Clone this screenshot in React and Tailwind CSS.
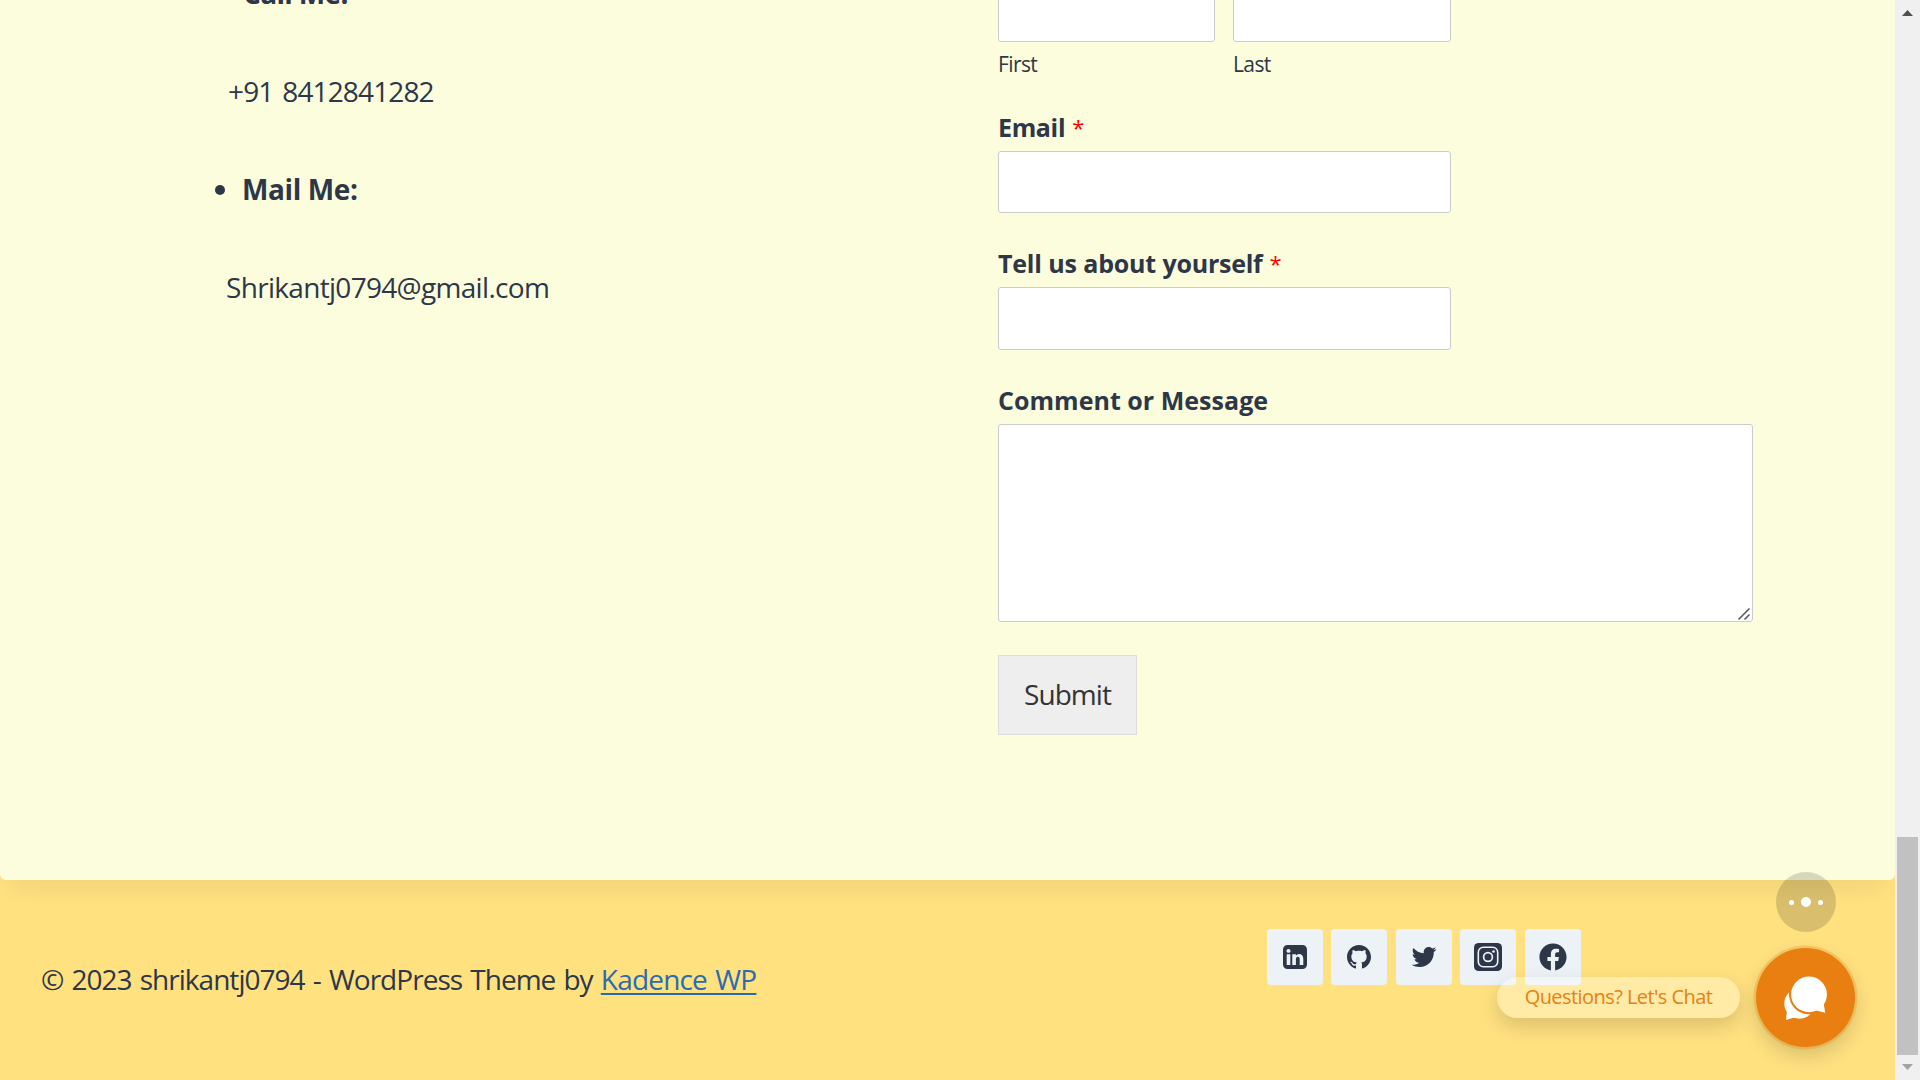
import { FaFacebook } from "react-icons/fa";

const LINKEDIN =
  "M3.703 22.094h3.609v-10.844h-3.609v10.844zM7.547 7.906c-0.016-1.062-0.781-1.875-2.016-1.875s-2.047 0.812-2.047 1.875c0 1.031 0.781 1.875 2 1.875h0.016c1.266 0 2.047-0.844 2.047-1.875zM16.688 22.094h3.609v-6.219c0-3.328-1.781-4.875-4.156-4.875-1.937 0-2.797 1.078-3.266 1.828h0.031v-1.578h-3.609s0.047 1.016 0 10.844v0h3.609v-6.062c0-0.313 0.016-0.641 0.109-0.875 0.266-0.641 0.859-1.313 1.859-1.313 1.297 0 1.813 0.984 1.813 2.453v5.797zM24 6.5v15c0 2.484-2.016 4.5-4.5 4.5h-15c-2.484 0-4.5-2.016-4.5-4.5v-15c0-2.484 2.016-4.5 4.5-4.5h15c2.484 0 4.5 2.016 4.5 4.5z";
const GITHUB =
  "M12 2c6.625 0 12 5.375 12 12 0 5.297-3.437 9.797-8.203 11.391-0.609 0.109-0.828-0.266-0.828-0.578 0-0.391 0.016-1.687 0.016-3.297 0-1.125-0.375-1.844-0.812-2.219 2.672-0.297 5.484-1.313 5.484-5.922 0-1.313-0.469-2.375-1.234-3.219 0.125-0.313 0.531-1.531-0.125-3.187-1-0.313-3.297 1.234-3.297 1.234-0.953-0.266-1.984-0.406-3-0.406s-2.047 0.141-3 0.406c0 0-2.297-1.547-3.297-1.234-0.656 1.656-0.25 2.875-0.125 3.187-0.766 0.844-1.234 1.906-1.234 3.219 0 4.594 2.797 5.625 5.469 5.922-0.344 0.313-0.656 0.844-0.766 1.609-0.688 0.313-2.438 0.844-3.484-1-0.656-1.141-1.844-1.234-1.844-1.234-1.172-0.016-0.078 0.734-0.078 0.734 0.781 0.359 1.328 1.75 1.328 1.75 0.703 2.141 4.047 1.422 4.047 1.422 0 1 0.016 1.937 0.016 2.234 0 0.313-0.219 0.688-0.828 0.578-4.766-1.594-8.203-6.094-8.203-11.391 0-6.625 5.375-12 12-12z";
const TWITTER =
  "M25.312 6.375c-0.688 1-1.547 1.891-2.531 2.609 0.016 0.219 0.016 0.438 0.016 0.656 0 6.672-5.078 14.359-14.359 14.359-2.859 0-5.516-0.828-7.75-2.266 0.406 0.047 0.797 0.063 1.219 0.063 2.359 0 4.531-0.797 6.266-2.156-2.219-0.047-4.078-1.5-4.719-3.5 0.313 0.047 0.625 0.078 0.953 0.078 0.453 0 0.906-0.063 1.328-0.172-2.312-0.469-4.047-2.5-4.047-4.953v-0.063c0.672 0.375 1.453 0.609 2.281 0.641-1.359-0.906-2.25-2.453-2.25-4.203 0-0.938 0.25-1.797 0.688-2.547 2.484 3.062 6.219 5.063 10.406 5.281-0.078-0.375-0.125-0.766-0.125-1.156 0-2.781 2.25-5.047 5.047-5.047 1.453 0 2.766 0.609 3.687 1.594 1.141-0.219 2.234-0.641 3.203-1.219-0.375 1.172-1.172 2.156-2.219 2.781 1.016-0.109 2-0.391 2.906-0.781z";

function InstagramIcon() {
  return (
    <svg viewBox="0 0 28 28" className="size-7" fill="none">
      <rect width="28" height="28" rx="4.6" fill="currentColor" />
      <rect x="4.3" y="4.3" width="19.4" height="19.4" rx="5" stroke="#edf2f7" strokeWidth="1.6" />
      <circle cx="14" cy="14" r="4.4" stroke="#edf2f7" strokeWidth="1.7" />
      <circle cx="19.5" cy="8.5" r="1.3" fill="#edf2f7" />
    </svg>
  );
}

function Glyph({ d, width }) {
  return (
    <svg viewBox={`0 0 ${width} 28`} className="h-7" fill="currentColor">
      <path d={d} />
    </svg>
  );
}

const socials = [
  { name: "LinkedIn", icon: <Glyph d={LINKEDIN} width={24} /> },
  { name: "GitHub", icon: <Glyph d={GITHUB} width={24} /> },
  { name: "Twitter", icon: <Glyph d={TWITTER} width={26} /> },
  { name: "Instagram", icon: <InstagramIcon /> },
  { name: "Facebook", icon: <FaFacebook className="size-7" /> },
];

const inputClass = "block border border-[#cccccc] bg-white rounded-[3px] outline-none";

function Label({ children, required, className = "" }) {
  return (
    <label className={`flex h-8 items-center whitespace-pre text-[25px] leading-8 font-bold ${className}`}>
      {children}
      {required && <span className="ml-[7px] text-[22px] font-normal tracking-normal text-[#ff0000]">*</span>}
    </label>
  );
}

function ContactDetails() {
  return (
    <section className="w-[998px] shrink-0 pl-[226px] text-[28px] leading-[49px]">
      <p className="-mt-[31px] pl-[17px] font-bold tracking-[-0.65px]">Call Me:</p>
      <p className="mt-[49px] pl-0.5 tracking-[-0.86px] [word-spacing:2.4px]">+91 8412841282</p>
      <div className="mt-[49px] -ml-[11px] flex items-center">
        <span className="size-2.5 rounded-full bg-[#2d3748]" />
        <p className="ml-[17px] font-bold tracking-[-0.37px]">Mail Me:</p>
      </div>
      <p className="mt-[49px] tracking-[-0.69px]">Shrikantj0794@gmail.com</p>
    </section>
  );
}

function ContactForm() {
  return (
    <form className="w-[755px]">
      <div className="flex w-[453px] justify-between">
        <div>
          <input className={`${inputClass} -mt-[20px] h-[62px] w-[217px]`} />
          <p className="mt-[7px] text-[21px] leading-[30px] tracking-[-0.6px]">First</p>
        </div>
        <div>
          <input className={`${inputClass} -mt-[20px] h-[62px] w-[218px]`} />
          <p className="mt-[7px] text-[21px] leading-[30px] tracking-[-0.6px]">Last</p>
        </div>
      </div>
      <Label required className="mt-8 tracking-[-0.35px]">Email</Label>
      <input className={`${inputClass} mt-2 h-[62px] w-[453px]`} />
      <Label required className="mt-[34px] tracking-[-0.25px] [word-spacing:0.5px]">Tell us about yourself</Label>
      <input className={`${inputClass} mt-2 h-[63px] w-[453px]`} />
      <Label className="mt-[34px] tracking-[0.03px]">Comment or Message</Label>
      <div className="relative mt-2">
        <textarea className={`${inputClass} h-[198px] w-full resize-none`} />
        <svg viewBox="0 0 12 12" className="absolute right-[3px] bottom-[2px] size-3" stroke="#555555" strokeWidth="1.5">
          <path d="M0.5 11.5 11.5 0.5M6.5 11.5 11.5 6.5" />
        </svg>
      </div>
      <button
        type="button"
        className="mt-[33px] block h-20 w-[139px] border border-[#dddddd] bg-[#eeeeee] pb-0.5 text-[28px] leading-none tracking-[-0.93px] text-[#333333]"
      >
        Submit
      </button>
    </form>
  );
}

function Footer() {
  return (
    <footer className="flex h-[200px] items-start pl-[41px]">
      <p className="mt-[75px] w-[1225.9px] shrink-0 text-[28px] leading-[49px] tracking-[-0.97px] [word-spacing:1.8px]">
        © 2023 shrikantj0794 - WordPress Theme by{" "}
        <a className="tracking-[-0.8px] text-[#2b6cb0] underline decoration-2 underline-offset-[3px]">Kadence WP</a>
      </p>
      <div className="mt-[49px] flex gap-[8.5px]">
        {socials.map((s) => (
          <a
            key={s.name}
            aria-label={s.name}
            className="flex size-14 items-center justify-center rounded-[4px] bg-[#edf2f7] text-[#2d3748]"
          >
            {s.icon}
          </a>
        ))}
      </div>
    </footer>
  );
}

function ChatWidget() {
  return (
    <>
      <div className="absolute top-[872px] left-[1776px] flex size-[60px] items-center justify-center rounded-full bg-black/15">
        <span className="size-[5px] rounded-full bg-white" />
        <span className="mx-[7px] size-2.5 rounded-full bg-white" />
        <span className="size-[5px] rounded-full bg-white" />
      </div>
      <div className="absolute top-[977px] left-[1497px] flex h-[41px] w-[243px] items-center justify-center rounded-full bg-white/30 pb-0.5 text-[20px] leading-none tracking-[-0.56px] whitespace-nowrap text-[#e88012] shadow-[0_8px_20px_rgba(0,0,0,0.15)]">
        Questions? Let's Chat
      </div>
      <div className="absolute top-[948px] left-[1756px] flex size-[99px] items-center justify-center rounded-full bg-[#e87f10] shadow-[0_0_0_2.5px_rgba(232,127,16,0.25),0_8px_20px_rgba(0,0,0,0.16)]">
        <svg viewBox="0 0 46 46" className="size-[46px]" fill="#ffffff">
          <circle cx="16.5" cy="28.5" r="15.2" />
          <path d="M4 35.5 3 44.9 13 42Z" />
          <circle cx="26" cy="19.3" r="20" fill="#e87f10" />
          <circle cx="26" cy="19.3" r="17.9" />
          <path d="M33 35.5 42.2 37.8 40.6 28Z" />
        </svg>
      </div>
    </>
  );
}

function Scrollbar() {
  return (
    <aside className="flex h-full w-[25px] flex-col items-center bg-[#f0f0f0]">
      <svg viewBox="0 0 11 6" className="mt-[10px] h-1.5 w-[11px] shrink-0" fill="#505050">
        <path d="M5.5 0 11 6H0Z" />
      </svg>
      <div className="mt-[821px] h-[218px] w-[21px] shrink-0 bg-[#c1c1c1]" />
      <svg viewBox="0 0 11 6" className="mt-[9px] h-1.5 w-[11px] shrink-0" fill="#a3a3a3">
        <path d="M0 0H11L5.5 6Z" />
      </svg>
    </aside>
  );
}

export default function App() {
  return (
    <div className="relative flex h-[1080px] w-[1920px] overflow-hidden bg-[#ffe180] font-['Open_Sans',sans-serif] text-[#2d3748]">
      <div className="w-[1895px] shrink-0 overflow-hidden">
        <main className="flex h-[880px] rounded-b-[6px] bg-[#fcfddd] shadow-[0_15px_25px_-10px_rgba(0,0,0,0.075)]">
          <ContactDetails />
          <ContactForm />
        </main>
        <Footer />
      </div>
      <Scrollbar />
      <ChatWidget />
    </div>
  );
}
